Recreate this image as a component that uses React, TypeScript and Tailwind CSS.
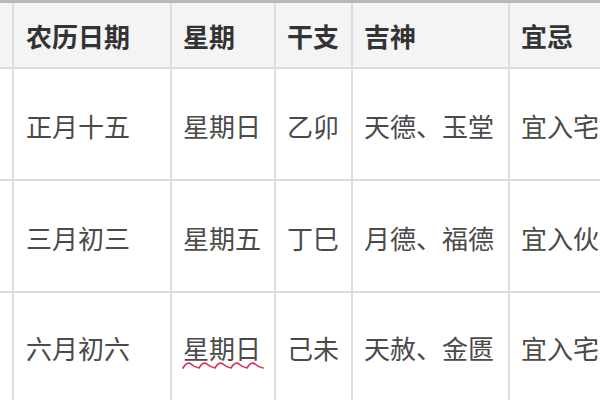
import React from "react";

const font = { fontFamily: '"Noto Sans CJK SC", "Noto Sans", sans-serif' };

const rows = [
  ["正月十五", "星期日", "乙卯", "天德、玉堂", "宜入宅"],
  ["三月初三", "星期五", "丁巳", "月德、福德", "宜入伙"],
  ["六月初六", "星期日", "己未", "天赦、金匮", "宜入宅"],
];

function Squiggle() {
  return (
    <svg className="absolute left-[-1px] top-[25px]" width="84" height="11" viewBox="0 0 84 11">
      <path
        d="M1 8 Q5 1 9 4 Q12 7 17 8 Q21 1 25 4 Q28 7 33 8 Q37 1 41 4 Q44 7 49 8 Q53 1 57 4 Q60 7 65 8 Q69 1 73 4 Q76 7 81 8"
        fill="none"
        stroke="#d9335d"
        strokeWidth="1.7"
        strokeLinejoin="round"
        strokeLinecap="round"
      />
    </svg>
  );
}

function Row({ cells, header, last, squiggle }: { cells: string[]; header?: boolean; last?: boolean; squiggle?: boolean }) {
  const h = header ? "h-[66px] bg-[#f4f4f4]" : last ? "h-[107px] bg-white" : "h-[112px] bg-white";
  const txt = header ? "font-bold text-[#333]" : "text-[#4a4a4a]";
  const pad = header ? "pt-[1px]" : "pt-[3px]";
  const cellBase = `flex items-center border-l-2 border-[#dedede] overflow-hidden whitespace-nowrap ${pad}`;
  return (
    <div className={`flex ${h} ${last ? "" : "border-b-2 border-[#dcdcdc]"} text-[26px] leading-none ${txt}`}>
      <div className={`w-[12px] shrink-0 ${header ? "bg-[#f4f4f4]" : ""}`}></div>
      <div className={`${cellBase} w-[158px] shrink-0 pl-[12px]`}>{cells[0]}</div>
      <div className={`${cellBase} w-[104px] shrink-0 pl-[11px]`}>
        {squiggle ? (
          <span className="relative">
            {cells[1]}
            <Squiggle />
          </span>
        ) : (
          cells[1]
        )}
      </div>
      <div className={`${cellBase} w-[77px] shrink-0 pl-[11px]`}>{cells[2]}</div>
      <div className={`${cellBase} w-[157px] shrink-0 pl-[11px]`}>{cells[3]}</div>
      <div className={`${cellBase} flex-1 pl-[11px]`}>{cells[4]}</div>
    </div>
  );
}

export default function App() {
  return (
    <div className="w-[600px] h-[400px] overflow-hidden bg-white flex flex-col" style={font}>
      <div className="h-[3px] shrink-0 bg-[#b8b8b8]"></div>
      <Row cells={["农历日期", "星期", "干支", "吉神", "宜忌"]} header />
      <Row cells={rows[0]} />
      <Row cells={rows[1]} />
      <Row cells={rows[2]} last squiggle />
    </div>
  );
}
